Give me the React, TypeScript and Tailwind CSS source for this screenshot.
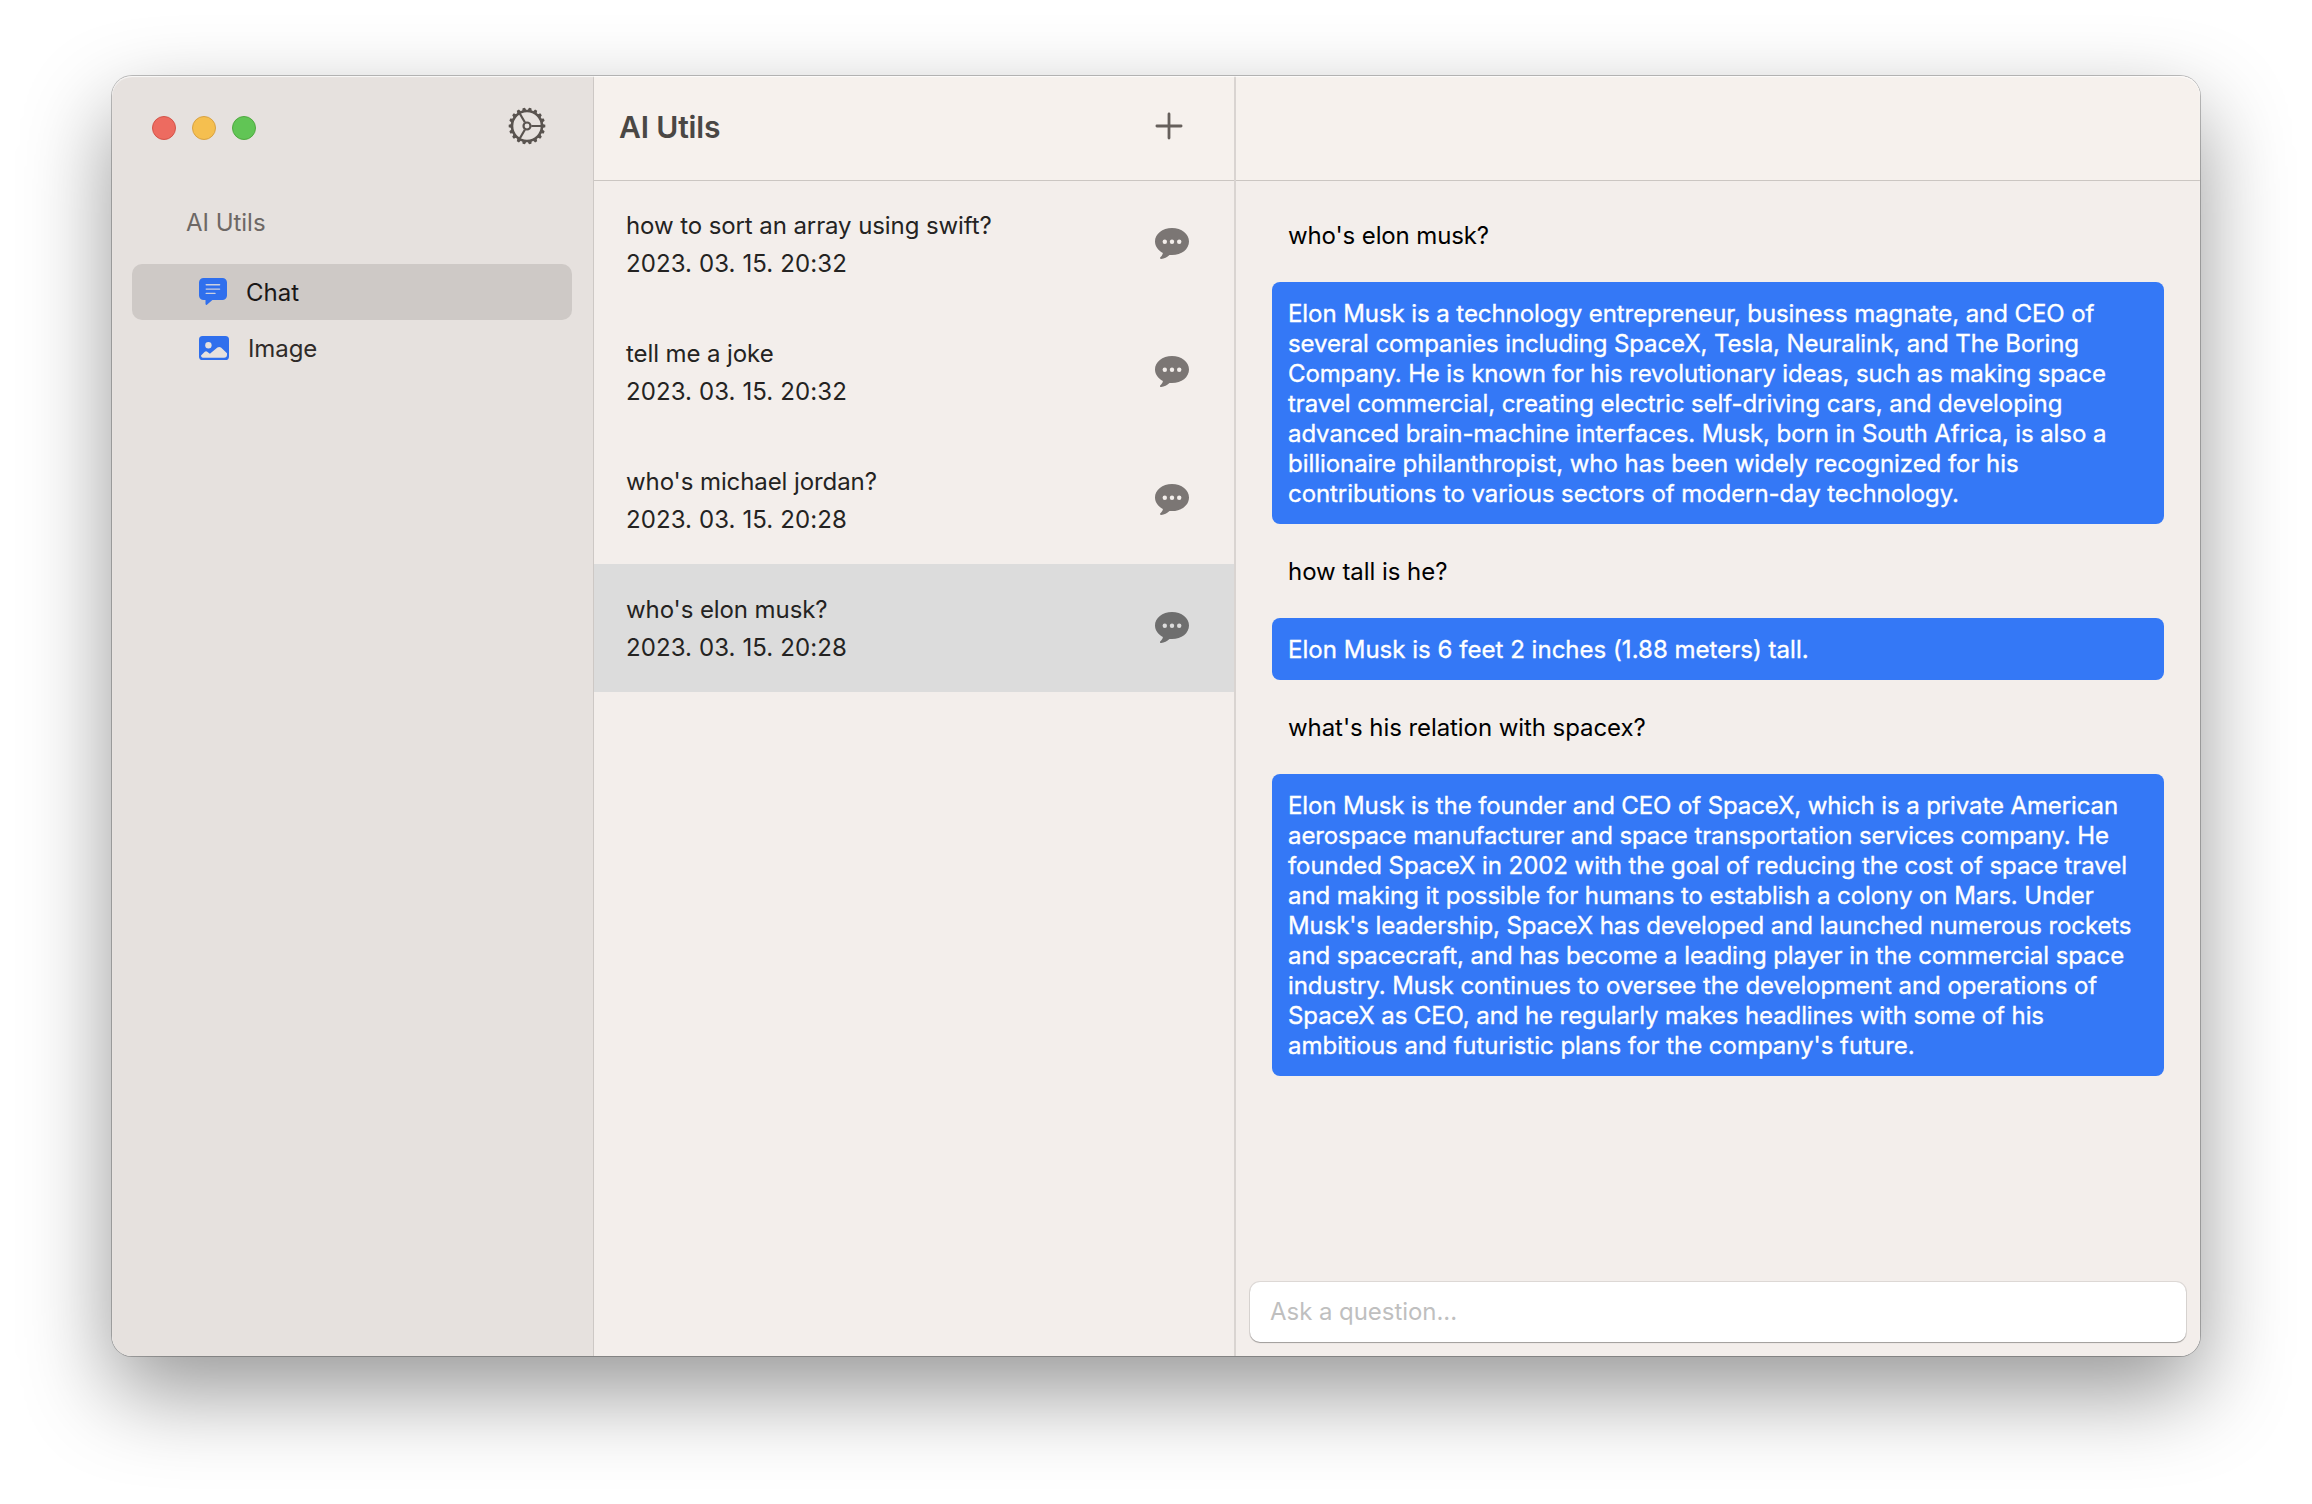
const conversations = [
  { title: 'how to sort an array using swift?', date: '2023. 03. 15. 20:32', selected: false },
  { title: 'tell me a joke', date: '2023. 03. 15. 20:32', selected: false },
  { title: "who's michael jordan?", date: '2023. 03. 15. 20:28', selected: false },
  { title: "who's elon musk?", date: '2023. 03. 15. 20:28', selected: true },
];

type Line = { text: string; tracking: string };
type Message = { from: 'user' | 'assistant'; lines: Line[] };

const messages: Message[] = [
  { from: 'user', lines: [{ text: "who's elon musk?", tracking: 'tracking-[-0.12px]' }] },
  {
    from: 'assistant',
    lines: [
      { text: 'Elon Musk is a technology entrepreneur, business magnate, and CEO of', tracking: 'tracking-[-0.075px]' },
      { text: 'several companies including SpaceX, Tesla, Neuralink, and The Boring', tracking: 'tracking-[-0.11px]' },
      { text: 'Company. He is known for his revolutionary ideas, such as making space', tracking: 'tracking-[-0.125px]' },
      { text: 'travel commercial, creating electric self-driving cars, and developing', tracking: 'tracking-[-0.06px]' },
      { text: 'advanced brain-machine interfaces. Musk, born in South Africa, is also a', tracking: 'tracking-[-0.09px]' },
      { text: 'billionaire philanthropist, who has been widely recognized for his', tracking: 'tracking-[-0.05px]' },
      { text: 'contributions to various sectors of modern-day technology.', tracking: 'tracking-[-0.065px]' },
    ],
  },
  { from: 'user', lines: [{ text: 'how tall is he?', tracking: 'tracking-[-0.04px]' }] },
  {
    from: 'assistant',
    lines: [{ text: 'Elon Musk is 6 feet 2 inches (1.88 meters) tall.', tracking: 'tracking-[0.025px]' }],
  },
  { from: 'user', lines: [{ text: "what's his relation with spacex?", tracking: 'tracking-[-0.07px]' }] },
  {
    from: 'assistant',
    lines: [
      { text: 'Elon Musk is the founder and CEO of SpaceX, which is a private American', tracking: 'tracking-[-0.11px]' },
      { text: 'aerospace manufacturer and space transportation services company. He', tracking: 'tracking-[-0.1px]' },
      { text: 'founded SpaceX in 2002 with the goal of reducing the cost of space travel', tracking: 'tracking-[-0.065px]' },
      { text: 'and making it possible for humans to establish a colony on Mars. Under', tracking: 'tracking-[-0.06px]' },
      { text: "Musk's leadership, SpaceX has developed and launched numerous rockets", tracking: 'tracking-[-0.11px]' },
      { text: 'and spacecraft, and has become a leading player in the commercial space', tracking: 'tracking-[-0.075px]' },
      { text: 'industry. Musk continues to oversee the development and operations of', tracking: 'tracking-[-0.065px]' },
      { text: 'SpaceX as CEO, and he regularly makes headlines with some of his', tracking: 'tracking-[-0.1px]' },
      { text: "ambitious and futuristic plans for the company's future.", tracking: 'tracking-[-0.02px]' },
    ],
  },
];

const teeth = Array.from({ length: 18 }, (_, i) => i * 20);

function GearIcon() {
  return (
    <svg viewBox="-19 -19 38 38" className="size-[38px] text-[#59534f]" fill="none" stroke="currentColor">
      {teeth.map((angle) => (
        <path key={angle} d="M15.5 -2.1 L18.3 -1.2 V1.2 L15.5 2.1 Z" fill="currentColor" stroke="none" transform={`rotate(${angle})`} />
      ))}
      <circle r="15" strokeWidth="2.6" />
      <circle r="3.5" strokeWidth="2.2" />
      <path d="M4.3 0H14.5" strokeWidth="2.2" />
      <path d="M4.3 0H14.5" strokeWidth="2.2" transform="rotate(120)" />
      <path d="M4.3 0H14.5" strokeWidth="2.2" transform="rotate(240)" />
    </svg>
  );
}

function ChatIcon() {
  return (
    <svg viewBox="0 0 30 28" className="h-[28px] w-[30px]">
      <path d="M4.6 0H23.4A4.6 4.6 0 0 1 28 4.6V17.4A4.6 4.6 0 0 1 23.4 22H13.4L7.9 26.7C7.3 27.2 6.5 26.9 6.5 26.1V22H4.6A4.6 4.6 0 0 1 0 17.4V4.6A4.6 4.6 0 0 1 4.6 0Z" fill="#2f6fed" />
      <path d="M7.2 6.7H20.6M7.2 11.1H20.6M7.2 15.4H16" stroke="#cbd0e0" strokeWidth="1.4" strokeLinecap="round" />
    </svg>
  );
}

function ImageIcon() {
  return (
    <svg viewBox="0 0 30 24" className="h-[24px] w-[30px]">
      <rect width="30" height="24" rx="3.6" fill="#2f6fed" />
      <circle cx="9.4" cy="9.3" r="3.2" fill="#e6e1de" />
      <path d="M2 19.5L5.8 15.8Q7 14.8 8.2 15.7L10.9 17.8L18.4 11.6Q20.2 10.3 22 11.6L28 17.2V18.8Q28 21.8 25 21.8H5Q2 21.8 2 19.5Z" fill="#e6e1de" />
    </svg>
  );
}

function BubbleIcon({ selected }: { selected: boolean }) {
  const dot = selected ? '#dcdcdc' : '#f3eeeb';
  return (
    <svg viewBox="0 0 34 32" className="h-[32px] w-[34px]">
      <path
        d="M17 0C26.6 0 34 5.9 34 13.6S26.6 27.1 17 27.1C16.2 27.1 15.3 27 14.5 26.9C12.2 28.9 9.2 30.6 6.2 31C5 31.1 4.6 30 5.4 29.2C6.8 27.9 7.7 26.6 7.9 25C3.1 22.6 0 18.4 0 13.6C0 5.9 7.4 0 17 0Z"
        fill={selected ? '#6e6e6e' : '#7b7674'}
      />
      <circle cx="9.8" cy="13.7" r="2.2" fill={dot} />
      <circle cx="17" cy="13.7" r="2.2" fill={dot} />
      <circle cx="24.2" cy="13.7" r="2.2" fill={dot} />
    </svg>
  );
}

function Sidebar() {
  return (
    <aside className="flex w-[482px] shrink-0 flex-col border-r border-[#cdc8c5] bg-[#e6e1de]">
      <div className="flex h-[104px] items-center justify-between pr-[47px] pl-10">
        <div className="flex gap-4">
          <span className="size-6 rounded-full border border-[#d35449] bg-[#ed6b60]" />
          <span className="size-6 rounded-full border border-[#d8a243] bg-[#f5bf4f]" />
          <span className="size-6 rounded-full border border-[#50a940] bg-[#61c555]" />
        </div>
        <div className="-mt-1">
          <GearIcon />
        </div>
      </div>
      <div className="pt-[27px] pl-[74px] text-2xl leading-[32px] tracking-[-0.03px] text-[#6d6865]">AI Utils</div>
      <nav className="mt-[25px] flex flex-col pr-[21px] pl-5">
        <a className="flex h-[56px] items-center rounded-[10px] bg-[#cec9c6] pl-[67px] text-[#1a1716]">
          <ChatIcon />
          <span className="pt-[2px] pl-[17px] text-2xl">Chat</span>
        </a>
        <a className="flex h-[56px] items-center pl-[67px] text-[#2f2b29]">
          <ImageIcon />
          <span className="pt-[2px] pl-[19px] text-2xl tracking-[-0.1px]">Image</span>
        </a>
      </nav>
    </aside>
  );
}

function ConversationList() {
  return (
    <section className="flex w-[642px] shrink-0 flex-col border-r-2 border-[#d9d4d1] bg-[#f3eeeb]">
      <header className="flex h-[105px] items-center justify-between border-b border-[#cbc6c2] bg-[#f6f1ed] pr-[51px] pl-[25px]">
        <h1 className="-mt-[2px] text-[30px] font-semibold tracking-[-0.15px] text-[#4a4744]">AI Utils</h1>
        <svg viewBox="0 0 28 28" className="-mt-1 size-[28px]" fill="none" stroke="#66605c" strokeWidth="2.8" strokeLinecap="round">
          <path d="M14 1.9V26.1M1.9 14H26.1" />
        </svg>
      </header>
      <ul className="-mt-px flex flex-col">
        {conversations.map((c) => (
          <li key={c.title} className={c.selected ? 'flex h-[128px] items-center justify-between bg-[#dcdcdc] pr-[45px] pl-8' : 'flex h-[128px] items-center justify-between pr-[45px] pl-8'}>
            <div className="pt-[2px] text-2xl leading-[38px] text-[#242322]">
              <p className="tracking-[-0.09px]">{c.title}</p>
              <p className="tracking-[0.1px]">{c.date}</p>
            </div>
            <BubbleIcon selected={c.selected} />
          </li>
        ))}
      </ul>
    </section>
  );
}

function ChatPane() {
  return (
    <main className="flex min-w-0 grow flex-col bg-[#f3eeeb]">
      <header className="h-[105px] shrink-0 border-b border-[#cbc6c2] bg-[#f6f1ed]" />
      <div className="flex grow flex-col gap-4 px-9 pt-[23px]">
        {messages.map((m, i) => (
          <div
            key={i}
            className={
              m.from === 'assistant'
                ? 'rounded-lg bg-[#3478f6] px-4 pt-[17px] pb-[15px] text-2xl leading-[30px] whitespace-nowrap text-white [-webkit-text-stroke:0.35px_white]'
                : 'px-4 pt-[17px] pb-[15px] text-2xl leading-[30px] whitespace-nowrap text-black'
            }
          >
            {m.lines.map((line) => (
              <p key={line.text} className={line.tracking}>
                {line.text}
              </p>
            ))}
          </div>
        ))}
      </div>
      <div className="px-[14px] pb-[14px]">
        <input
          placeholder="Ask a question..."
          className="block h-[60px] w-full rounded-[10px] bg-white px-5 pb-[2px] text-2xl tracking-[-0.05px] shadow-[0_0_0_1px_rgba(0,0,0,0.09),0_1px_1px_0_rgba(0,0,0,0.28)] outline-none placeholder:text-[#bfbfbf] placeholder:opacity-100"
        />
      </div>
    </main>
  );
}

export default function App() {
  return (
    <div className="h-[1504px] w-[2312px] overflow-hidden bg-white px-[112px] pt-[76px] font-['Inter',sans-serif]">
      <div className="rounded-[20px] shadow-[0_0_0_1px_rgba(0,0,0,0.24),0_36px_88px_0_rgba(0,0,0,0.41)]">
        <div className="relative flex h-[1280px] overflow-hidden rounded-[20px]">
          <Sidebar />
          <ConversationList />
          <ChatPane />
          <div className="pointer-events-none absolute inset-0 rounded-[20px] shadow-[inset_0_1px_1px_rgba(255,255,255,0.8)]" />
        </div>
      </div>
    </div>
  );
}
